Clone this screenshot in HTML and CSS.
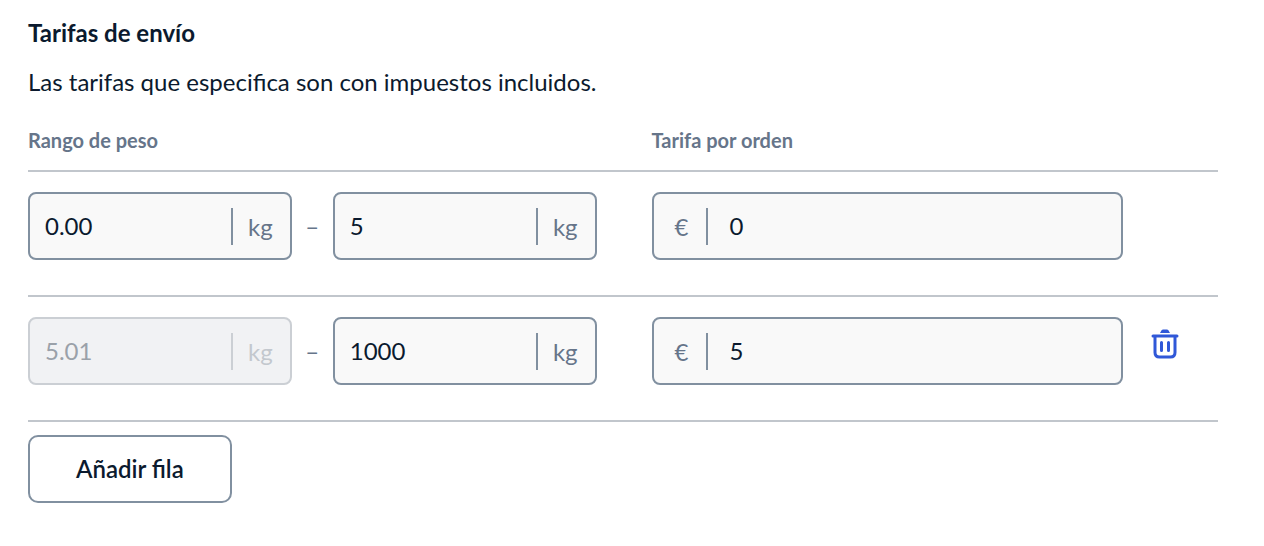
FILE: index.html
```html
<!DOCTYPE html>
<html lang="es">
<head>
<meta charset="utf-8">
<meta name="viewport" content="width=device-width, initial-scale=1">
<title>Tarifas de envío</title>
<link rel="stylesheet" href="styles.css">
</head>
<body>
<main class="rates">
  <h1 class="title">Tarifas de envío</h1>
  <p class="intro">Las tarifas que especifica son con impuestos incluidos.</p>
  <table class="table">
    <colgroup><col class="col-range"><col class="col-rate"><col class="col-action"></colgroup>
    <thead>
      <tr><th scope="col">Rango de peso</th><th scope="col">Tarifa por orden</th><td></td></tr>
    </thead>
    <tbody>
      <tr>
        <td>
          <div class="range">
            <label class="field"><input class="input" aria-label="Peso mínimo" value="0.00"><span class="unit">kg</span></label>
            <span class="dash">–</span>
            <label class="field"><input class="input" aria-label="Peso máximo" value="5"><span class="unit">kg</span></label>
          </div>
        </td>
        <td><label class="field"><span class="currency">€</span><input class="input" aria-label="Tarifa" value="0"></label></td>
        <td></td>
      </tr>
      <tr>
        <td>
          <div class="range">
            <label class="field disabled"><input class="input" aria-label="Peso mínimo" value="5.01" disabled><span class="unit">kg</span></label>
            <span class="dash">–</span>
            <label class="field"><input class="input" aria-label="Peso máximo" value="1000"><span class="unit">kg</span></label>
          </div>
        </td>
        <td><label class="field"><span class="currency">€</span><input class="input" aria-label="Tarifa" value="5"></label></td>
        <td>
          <button class="delete" type="button" aria-label="Eliminar fila">
            <svg width="28" height="30" viewBox="0 0 28 30" fill="none" stroke="currentColor" stroke-width="3" stroke-linecap="round" stroke-linejoin="round">
              <path fill="currentColor" stroke="none" d="M9 4L10.400 1.600Q11 0.500 12.200 0.500H15.800Q17 0.500 17.600 1.600L19 4Z"/>
              <path d="M2 7H26M4 7.500V23.500Q4 28 8.500 28H19.500Q24 28 24 23.500V7.500"/>
              <path d="M10.500 13.500V21.500M17.500 13.500V21.500"/>
            </svg>
          </button>
        </td>
      </tr>
    </tbody>
  </table>
  <button class="add" type="button">Añadir fila</button>
</main>
</body>
</html>
```
FILE: styles.css
```css
* {
  box-sizing: border-box;
}

body {
  margin: 0;
  background: #fff;
  color: #0b1a2e;
  font: 24px/32px Lato, sans-serif;
}

.rates {
  padding: 17px 46px 44px 28px;
}

.title {
  margin: 0;
  font-size: 24px;
  line-height: 32px;
  font-weight: 700;
}

.intro {
  margin: 17px 0 0;
}

.table {
  width: 100%;
  margin-top: 17px;
  border-collapse: separate;
  border-spacing: 0;
  table-layout: fixed;
}

.col-range {
  width: 52.4%;
}

.col-rate {
  width: 39.6%;
}

.table th,
.table td {
  padding: 0;
  border-bottom: 2px solid #c1c6cc;
  text-align: left;
  vertical-align: top;
}

.table th {
  height: 57px;
  padding-top: 9px;
  color: #66758a;
  font-size: 20px;
  line-height: 32px;
  font-weight: 700;
}

.table tbody td {
  height: 125px;
  padding-top: 20px;
}

.range {
  display: flex;
  align-items: center;
  padding-right: 55px;
}

.field {
  display: flex;
  flex: 1;
  align-items: center;
  min-width: 0;
  height: 68px;
  border: 2px solid #8190a0;
  border-radius: 8px;
  background: #f9f9f9;
}

.input {
  flex: 1;
  min-width: 0;
  padding: 0 15px;
  border: 0;
  outline: 0;
  background: transparent;
  color: inherit;
  font: inherit;
}

.unit,
.currency {
  color: #66758a;
}

.unit {
  padding: 3px 17px 2px 15px;
  border-left: 2px solid #8190a0;
}

.currency {
  margin-right: 6px;
  padding: 3px 18px 2px 21px;
  border-right: 2px solid #8190a0;
}

.dash {
  width: 41px;
  color: #66758a;
  text-align: center;
}

.disabled {
  border-color: #cbcfd4;
  background: #f1f2f4;
  color: #9aa1a9;
}

.disabled .unit {
  border-color: #cbcfd4;
  color: #c3c8ce;
}

.delete {
  display: block;
  margin: 12px 0 0 28px;
  padding: 0;
  border: 0;
  background: none;
  color: #3058d8;
  cursor: pointer;
}

.delete svg {
  display: block;
}

.add {
  display: block;
  height: 68px;
  margin-top: 13px;
  padding: 0 46px;
  border: 2px solid #8190a0;
  border-radius: 10px;
  background: #fff;
  color: inherit;
  font: inherit;
  font-weight: 600;
  cursor: pointer;
}
```
